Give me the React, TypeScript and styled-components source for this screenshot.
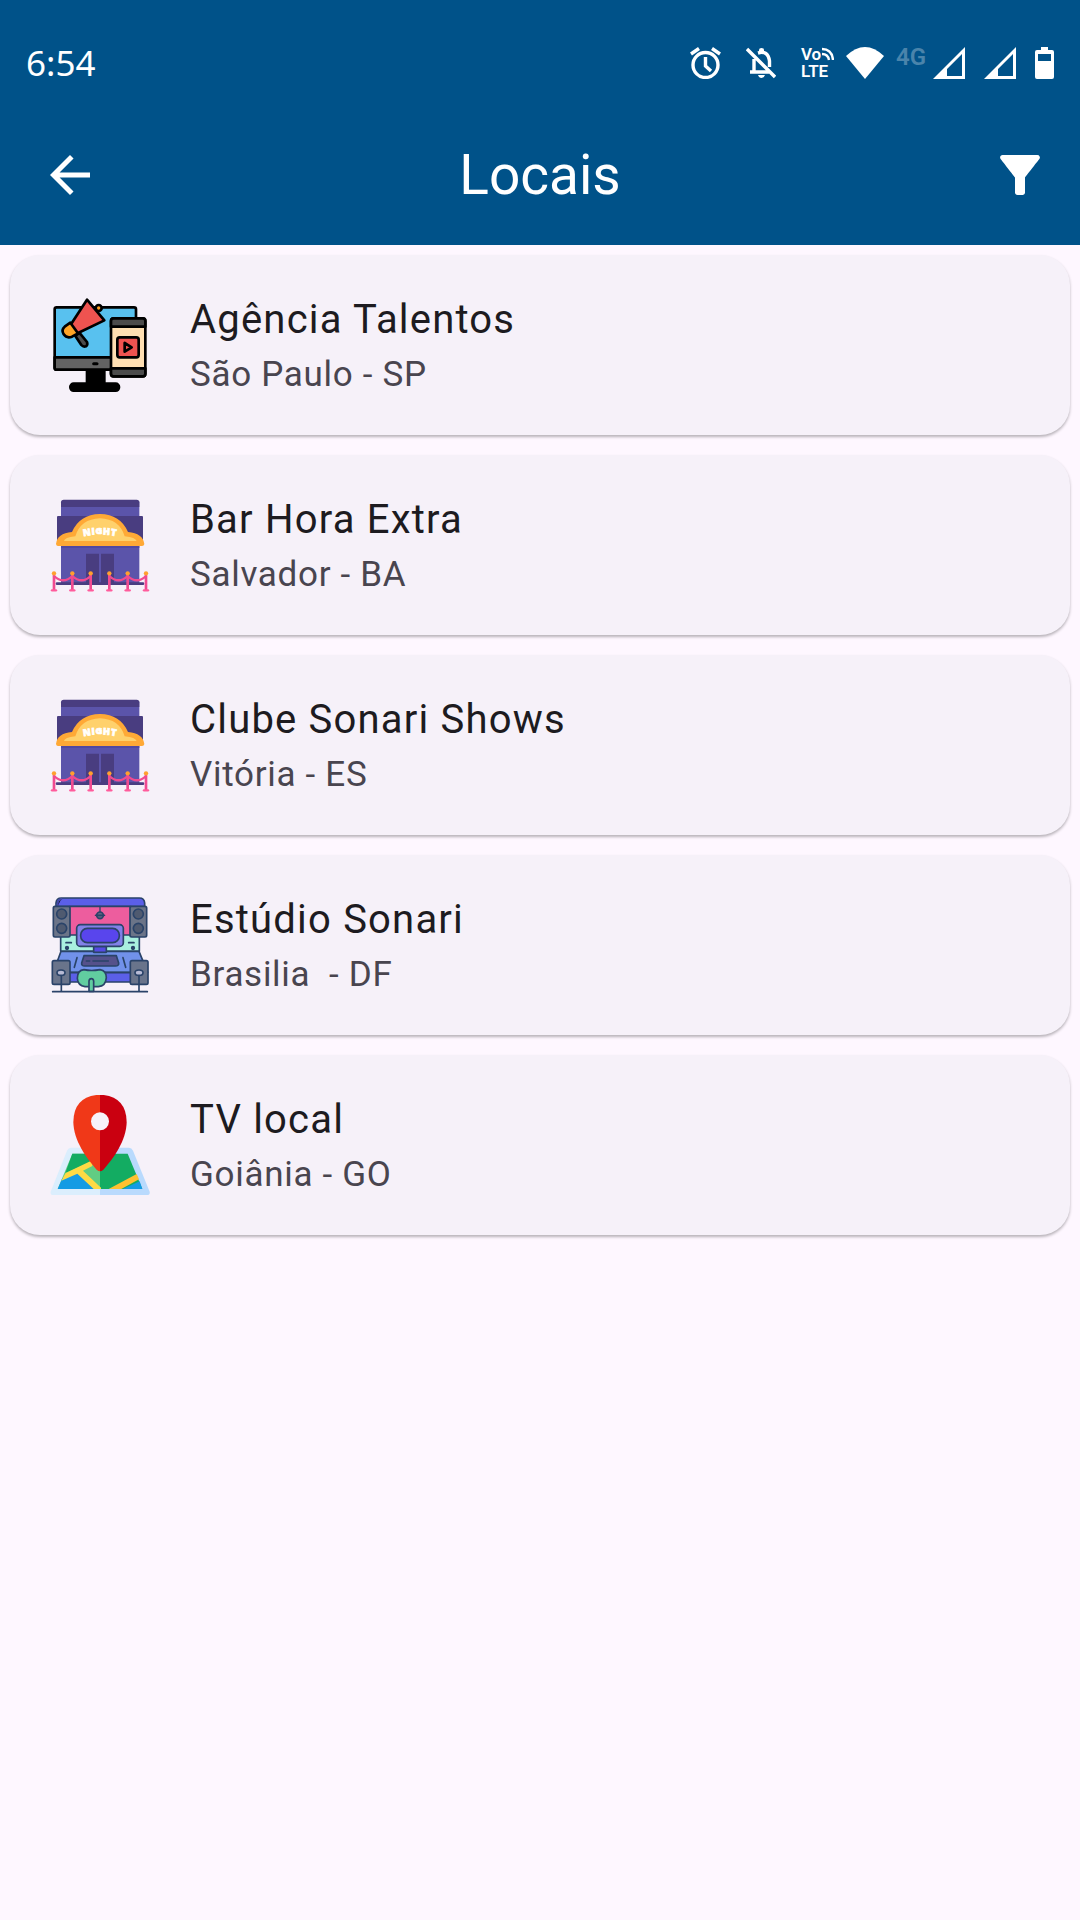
import React from "react";
import styled, { createGlobalStyle } from "styled-components";

const GlobalStyle = createGlobalStyle`
  *, *::before, *::after { box-sizing: border-box; }
  body {
    margin: 0;
    background: #fef7ff;
    font-family: Roboto, "Noto Sans", sans-serif;
    color: #1d1b20;
  }
`;

const Screen = styled.div`
  min-height: 100vh;
  background: #fef7ff;
`;

const Header = styled.header`
  background: #005289;
  color: #fff;
`;

const StatusBar = styled.div`
  display: flex;
  align-items: center;
  justify-content: space-between;
  height: 105px;
  padding: 20px 26px 0;
`;

const Clock = styled.time`
  font-family: "Noto Sans", sans-serif;
  font-size: 35px;
  line-height: 40px;
`;

const IconGroup = styled.div<{ $gap: number }>`
  display: flex;
  align-items: center;
  gap: ${(p) => p.$gap}px;
`;

const Glyph = styled.svg`
  display: block;
  flex: none;
`;

const Volte = styled.div`
  display: grid;
  width: 33px;
  font: 600 17px/18px Roboto, sans-serif;
`;

const VolteTop = styled.div`
  display: flex;
  align-items: center;
  height: 16px;
`;

const Network = styled.span`
  align-self: flex-start;
  font: 600 24px/20px Roboto, sans-serif;
  color: #4a84ab;
`;

const AppBar = styled.div`
  display: grid;
  grid-template-columns: 70px 1fr 70px;
  align-items: center;
  height: 140px;
  padding: 0 30px;
`;

const Title = styled.h1`
  margin: 0;
  font-size: 55px;
  font-weight: 400;
  line-height: 70px;
  text-align: center;
`;

const IconButton = styled.button`
  display: flex;
  justify-content: flex-end;
  height: 60px;
  padding: 0;
  border: 0;
  background: none;
  color: inherit;
  cursor: pointer;
`;

const List = styled.ul`
  display: grid;
  gap: 20px;
  margin: 0;
  padding: 10px;
  list-style: none;
`;

const Card = styled.li`
  display: flex;
  align-items: center;
  gap: 40px;
  padding: 35px 40px;
  border-radius: 30px;
  background: #f6f1f9;
  box-shadow: 0 2px 3px rgba(0, 0, 0, 0.28);
`;

const Picture = styled.svg`
  display: block;
  flex: none;
  width: 100px;
  height: 100px;
`;

const Name = styled.h2`
  margin: 0;
  font-size: 40px;
  font-weight: 400;
  line-height: 60px;
  letter-spacing: 0.03em;
`;

const Place = styled.p`
  margin: 0;
  font-size: 35px;
  line-height: 50px;
  letter-spacing: 0.02em;
  white-space: pre;
  color: #49454f;
`;

const Signal = () => (
  <Glyph width="32" height="32" viewBox="0 0 32 32" fill="#fff">
    <path fillRule="evenodd" d="M0 32L32 0V32ZM14 29H29V7L14 22Z" />
  </Glyph>
);

const AgencyArt = () => (
  <Picture viewBox="30 30 300 300" stroke="#000" strokeWidth="8" strokeLinejoin="round" strokeLinecap="round">
    <path d="M141 258H193V296H141Z" fill="#000" />
    <rect x="91" y="296" width="146" height="21" rx="10" fill="#000" />
    <rect x="44" y="67" width="244" height="187" rx="6" fill="#58c1ef" />
    <path d="M44 217H288V248Q288 254 282 254H50Q44 254 44 248Z" fill="#636363" />
    <path d="M161 236H171" strokeWidth="9" />
    <circle cx="176" cy="69" r="9" fill="#ff9f22" />
    <path d="M106 153L118 143L141 171Q144 180 138 184Q130 187 124 180Z" fill="#4c4c4c" />
    <path d="M141 44L193 106L108 147L91 121Z" fill="#ef5350" />
    <path d="M91 113L74 125Q63 134 71 148Q80 161 96 155L114 145Z" fill="#ffa426" />
    <rect x="213" y="100" width="103" height="174" rx="8" fill="#ffdfb2" />
    <path d="M213 125V108Q213 100 221 100H308Q316 100 316 108V125Z" fill="#4b4b4b" />
    <path d="M213 250H316V266Q316 274 308 274H221Q213 274 213 266Z" fill="#4b4b4b" />
    <rect x="232" y="157" width="64" height="60" rx="7" fill="#ef5350" />
    <path d="M254 174V200L275 187Z" fill="#ef5350" />
  </Picture>
);

const NightArt = () => (
  <Picture viewBox="30 24 300 300">
    <rect x="63" y="44" width="235" height="246" fill="#5b54aa" />
    <path d="M63 60V46Q63 38 71 38H290Q298 38 298 46V60Z" fill="#493d80" />
    <rect x="51" y="87" width="258" height="75" rx="3" fill="#493d80" />
    <rect x="63" y="176" width="235" height="7" fill="#5149a0" />
    <path d="M138 200H177V288H138ZM183 200H222V288H183Z" fill="#493d80" />
    <rect x="47" y="286" width="266" height="8" rx="4" fill="#493d80" />
    <path d="M48 171Q51 139 96 135Q119 82 180 81Q241 82 264 135Q309 139 313 171Q312 177 306 177H54Q49 177 48 171Z" fill="#ffa936" />
    <path d="M72 162Q73 152 106 148Q122 96 180 94Q238 96 254 148Q287 152 290 162Z" fill="#ffd16c" />
    <g
      fill="#fff"
      stroke="#fff"
      strokeWidth="2"
      fontFamily="Open Sans, sans-serif"
      fontSize="28"
      fontWeight="800"
      textAnchor="middle"
    >
      <text x="142" y="146" transform="rotate(-9 142 146)">N</text>
      <text x="160" y="143" transform="rotate(-4 160 143)">I</text>
      <text x="177" y="142">G</text>
      <text x="199" y="143" transform="rotate(4 199 143)">H</text>
      <text x="220" y="146" transform="rotate(9 220 146)">T</text>
    </g>
    {[42, 208].map((x) => (
      <g key={x} fill="none" stroke="#f04b91" strokeWidth="7" strokeLinecap="round">
        <path d={`M${x} 267Q${x + 28} 293 ${x + 55} 267Q${x + 83} 293 ${x + 110} 267`} />
        {[x, x + 55, x + 110].map((post) => (
          <g key={post}>
            <path d={`M${post} 266V308`} strokeWidth="8" />
            <path d={`M${post - 6} 310H${post + 6}`} stroke="#ff5c9c" />
            <circle cx={post} cy="259" r="6.5" fill="#ffa02e" stroke="none" />
          </g>
        ))}
      </g>
    ))}
  </Picture>
);

const StudioArt = () => (
  <Picture viewBox="30 30 300 300" stroke="#2a4369" strokeWidth="5" strokeLinejoin="round" strokeLinecap="round">
    <path d="M48 65V54Q49 39 64 39H298Q313 39 314 54V65Z" fill="#5b5fe8" />
    <path d="M53 62V56Q54 44 64 42" stroke="#4248a8" strokeWidth="6" />
    <rect x="88" y="64" width="184" height="90" fill="#ed5d9e" />
    <path d="M62 150H298V199H62Z" fill="#a9f0df" />
    <path d="M63 199H297L323 262H40Z" fill="#7191ea" />
    <rect x="80" y="263" width="204" height="28" fill="#5b5fe8" />
    <path d="M180 64V83M166 91H194" strokeWidth="4" />
    <circle cx="180" cy="91" r="10" fill="#616984" />
    <path d="M168 91H192" />
    {[40, 270].map((x) => (
      <g key={x}>
        <rect x={x} y="64" width="50" height="92" rx="5" fill="#6b7488" />
        <circle cx={x + 25} cy="87" r="15" fill="#4f5a70" />
        <circle cx={x + 25} cy="130" r="15" fill="#4f5a70" />
      </g>
    ))}
    <path d="M161 184H199V202H161Z" fill="#554be1" />
    <rect x="110" y="119" width="140" height="65" rx="11" fill="#8280e8" />
    <rect x="122" y="130" width="116" height="43" rx="20" fill="#5945ed" />
    <path d="M78 173H94M266 173H282" />
    <circle cx="81" cy="189" r="4" fill="#2a4369" />
    <circle cx="279" cy="189" r="4" fill="#2a4369" />
    <path d="M132 212H229L236 234Q237 243 226 243H134Q124 243 125 234Z" fill="#55518b" />
    <path d="M139 228H149M159 228H205M111 218L103 247M249 218L257 247" />
    {[37, 271].map((x) => (
      <rect key={x} x={x} y="227" width="53" height="71" rx="5" fill="#69748b" />
    ))}
    <path d="M64 270V319M297 270V319M38 320H322" />
    <ellipse cx="63" cy="263" rx="12" ry="8" fill="#b8bbd5" />
    <ellipse cx="297" cy="263" rx="12" ry="8" fill="#b8bbd5" />
    <path d="M132 254Q154 259 180 254Q199 257 199 278Q197 304 175 305H135Q113 302 112 280Q112 256 132 254Z" fill="#61cda0" />
    <path d="M147 319V288Q148 281 154 281Q160 281 161 288V319Z" fill="#61cda0" />
  </Picture>
);

const MapArt = () => (
  <Picture viewBox="30 30 300 300">
    <path d="M180 188H93Q85 188 81 197L32 320Q30 330 40 330H180Z" fill="#dbeefd" />
    <path d="M180 188H267Q275 188 279 197L329 320Q331 330 321 330H180Z" fill="#b9dafd" />
    <path d="M97 206H180V312H53Z" fill="#61cc83" />
    <path d="M97 206H180L155 230L76 264Z" fill="#13ac62" />
    <path d="M180 206H263L307 312H180Z" fill="#13ac62" />
    <path d="M67 280L116 258L162 312H53Z" fill="#149be4" />
    <path d="M248 312L299 289L307 312Z" fill="#149be4" />
    <path d="M77 264L157 226V243L129 257L183 308V312H161L112 266L64 287Z" fill="#ffda44" />
    <path d="M206 312L290 267L297 283L244 312Z" fill="#fec130" />
    <path d="M180 29Q101 33 100 111C101 167 139 219 170 254Q175 259 180 259Z" fill="#f03818" />
    <path d="M180 29Q259 33 260 111C259 167 221 219 190 254Q185 259 180 259Z" fill="#ca0010" />
    <circle cx="180" cy="109" r="27" fill="#f7f2fa" />
  </Picture>
);

const places = [
  { name: "Agência Talentos", place: "São Paulo - SP", Art: AgencyArt },
  { name: "Bar Hora Extra", place: "Salvador - BA", Art: NightArt },
  { name: "Clube Sonari Shows", place: "Vitória - ES", Art: NightArt },
  { name: "Estúdio Sonari", place: "Brasilia  - DF", Art: StudioArt },
  { name: "TV local", place: "Goiânia - GO", Art: MapArt },
];

export default function App() {
  return (
    <Screen>
      <GlobalStyle />
      <Header>
        <StatusBar>
          <Clock>6:54</Clock>
          <IconGroup $gap={19}>
            <IconGroup $gap={12}>
              <IconGroup $gap={25}>
                <Glyph width="31" height="32" viewBox="0 0 31 32" fill="none" stroke="#fff" strokeWidth="3.4">
                  <circle cx="15.5" cy="18" r="12.5" />
                  <path d="M15.5 10V19L21 24M1 7L9 1.5M22 1.5L30 7" />
                </Glyph>
                <Glyph width="30" height="32" viewBox="0 0 30 32" fill="none" stroke="#fff" strokeWidth="3.4">
                  <path d="M1 2L29 30M8 12V25H23M4 25H9M12 6Q22 3 23.5 14V20" />
                  <path d="M13 5V3Q13 1 15.5 1Q18 1 18 3V5ZM12 28H19Q18 31 15.5 31Q13 31 12 28Z" fill="#fff" stroke="none" />
                </Glyph>
                <Volte>
                  <VolteTop>
                    Vo
                    <Glyph width="13" height="14" viewBox="0 0 13 14" fill="none" stroke="#fff" strokeWidth="2.4">
                      <path d="M1 2Q11 2 12 13M1 7Q7 7 8 13" />
                    </Glyph>
                  </VolteTop>
                  <span>LTE</span>
                </Volte>
              </IconGroup>
              <Glyph width="38" height="32" viewBox="0 0 38 32" fill="#fff">
                <path d="M0 9Q19 -9 38 9L19 32Z" />
              </Glyph>
              <IconGroup $gap={7}>
                <Network>4G</Network>
                <Signal />
              </IconGroup>
            </IconGroup>
            <Signal />
            <Glyph width="19" height="32" viewBox="0 0 19 32" fill="#fff">
              <path fillRule="evenodd" d="M6 0H13V3H17Q19 3 19 5V30Q19 32 17 32H2Q0 32 0 30V5Q0 3 2 3H6ZM3 7V14H16V7Z" />
            </Glyph>
          </IconGroup>
        </StatusBar>
        <AppBar>
          <IconButton aria-label="Voltar">
            <Glyph width="60" height="60" viewBox="0 0 24 24" fill="currentColor">
              <path d="M20 11H7.830l5.590-5.590L12 4l-8 8 8 8 1.410-1.410L7.830 13H20v-2z" />
            </Glyph>
          </IconButton>
          <Title>Locais</Title>
          <IconButton aria-label="Filtrar">
            <Glyph width="60" height="60" viewBox="0 0 24 24" fill="currentColor">
              <path d="M4.250 5.610C6.270 8.200 10 13 10 13v6c0 .55.45 1 1 1h2c.55 0 1-.45 1-1v-6s3.720-4.800 5.740-7.390A1 1 0 0 0 18.950 4H5.040c-.83 0-1.300.95-.79 1.610z" />
            </Glyph>
          </IconButton>
        </AppBar>
      </Header>
      <main>
        <List>
          {places.map(({ name, place, Art }) => (
            <Card key={name}>
              <Art />
              <div>
                <Name>{name}</Name>
                <Place>{place}</Place>
              </div>
            </Card>
          ))}
        </List>
      </main>
    </Screen>
  );
}
